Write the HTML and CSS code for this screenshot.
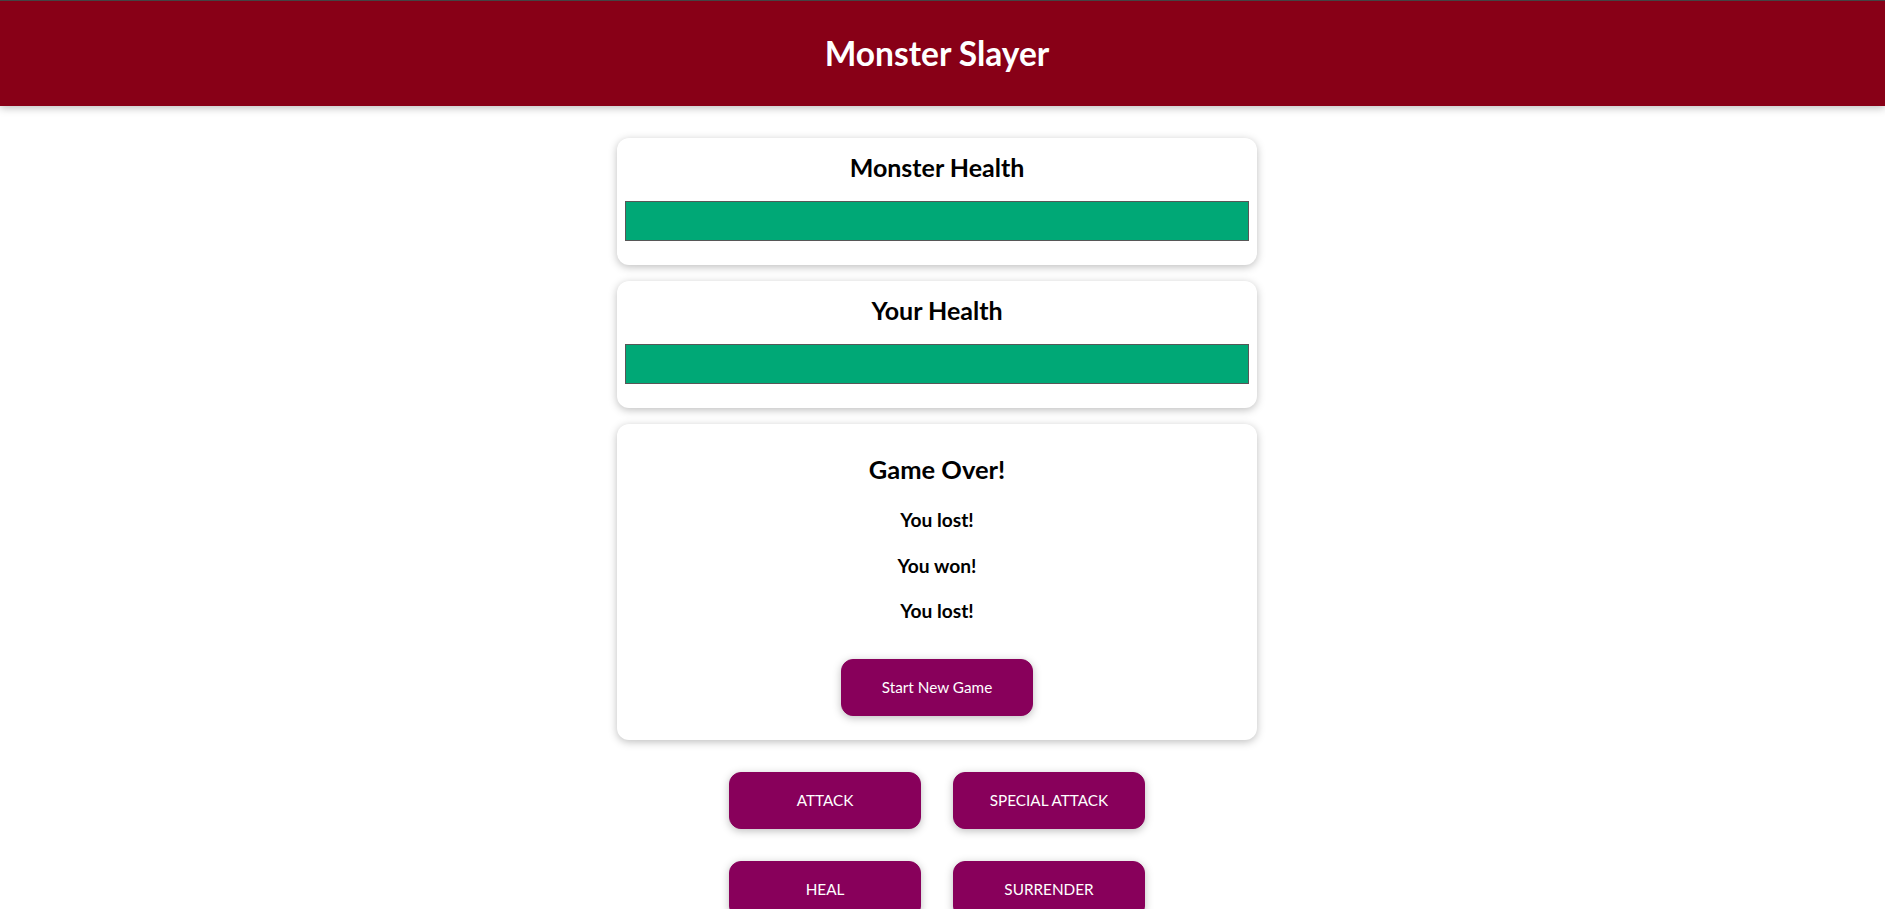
FILE: index.html
```html
<!DOCTYPE html>
<html lang="en">
<head>
<meta charset="utf-8">
<title>Monster Slayer</title>
<link rel="stylesheet" href="styles.css">
</head>
<body>
<header class="header">
  <h1 class="header__title">Monster Slayer</h1>
</header>
<main class="page">
  <div class="game">
    <section class="container">
      <h2 class="container__title">Monster Health</h2>
      <div class="healthbar"><div class="healthbar__value" style="width: 100%"></div></div>
    </section>
    <section class="container">
      <h2 class="container__title">Your Health</h2>
      <div class="healthbar"><div class="healthbar__value" style="width: 100%"></div></div>
    </section>
    <section class="container container--result">
      <h2 class="result__title">Game Over!</h2>
      <h3 class="result__line">You lost!</h3>
      <h3 class="result__line">You won!</h3>
      <h3 class="result__line">You lost!</h3>
      <button class="btn">Start New Game</button>
    </section>
    <section class="controls">
      <button class="btn">ATTACK</button>
      <button class="btn">SPECIAL ATTACK</button>
      <button class="btn">HEAL</button>
      <button class="btn">SURRENDER</button>
    </section>
  </div>
</main>
</body>
</html>
```

FILE: styles.css
```css
* {
  box-sizing: border-box;
}

html {
  font-family: "Lato", "Noto Sans", sans-serif;
}

body {
  margin: 0;
  background: #ffffff;
}

.header {
  border-top: 1px solid #444444;
  box-shadow: 0 2px 8px rgba(0, 0, 0, 0.26);
  padding: 7px 19px 8px 8px;
  background-color: #880017;
  color: #ffffff;
  text-align: center;
  margin-bottom: 32px;
}

.header__title {
  font-size: 33.5px;
  font-weight: 700;
  line-height: 48px;
  margin: 21px 0;
}

.page {
  display: block;
  padding-right: 11px;
}

.game {
  width: 90%;
  max-width: 640px;
  margin: 0 auto;
}

.container {
  text-align: center;
  padding: 8px;
  margin: 16px auto;
  box-shadow: 0 2px 8px rgba(0, 0, 0, 0.26);
  border-radius: 12px;
  background: #ffffff;
}

.container:first-child {
  margin-top: 0;
}

.container__title {
  font-size: 25px;
  font-weight: 700;
  line-height: 35px;
  margin: 4px;
}

.healthbar {
  width: 100%;
  height: 40px;
  border: 1px solid #575757;
  margin: 16px 0;
  background: #fde5e5;
}

.healthbar__value {
  background-color: #00a876;
  height: 100%;
}

.result__title {
  font-size: 25.5px;
  font-weight: 700;
  line-height: 35px;
  margin: 19.5px 0;
}

.result__line {
  font-size: 19.2px;
  font-weight: 700;
  line-height: 27px;
  margin: 18.6px 0;
}

.btn {
  font: inherit;
  font-size: 15.3px;
  line-height: 23px;
  border: 1px solid #88005b;
  background-color: #88005b;
  color: #ffffff;
  padding: 16px 32px;
  border-radius: 12px;
  margin: 16px;
  width: 192px;
  cursor: pointer;
  box-shadow: 0 2px 8px rgba(0, 0, 0, 0.26);
}

.controls {
  display: flex;
  flex-wrap: wrap;
  justify-content: center;
}
```
